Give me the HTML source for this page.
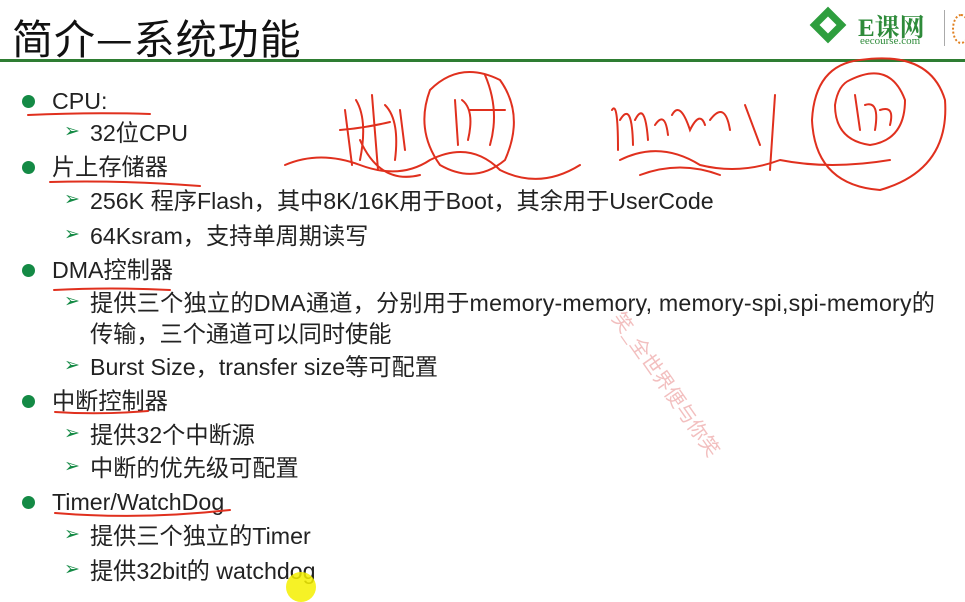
<!DOCTYPE html>
<html><head><meta charset="utf-8"><style>
body{margin:0;width:965px;height:597px;background:#fff;overflow:hidden;position:relative;font-family:"Liberation Sans","Noto Sans CJK SC",sans-serif;color:#222}
.t{position:absolute;left:12px;top:6px;font-size:41px;font-family:"Noto Sans CJK SC",sans-serif;color:#111;letter-spacing:1px}
.line{position:absolute;left:0;top:59px;width:965px;height:3px;background:#2e7d32}
.r{position:absolute;font-size:23.2px;white-space:nowrap;line-height:26px}
.d{position:absolute;width:13px;height:13px;border-radius:50%;background:#148a45}
.a{position:absolute;color:#148a45;font-size:19px}
</style></head><body>
<div class="t">简介—系统功能</div>
<div class="line"></div>
<div style="position:absolute;left:815px;top:12px;width:26px;height:26px;background:#2e9e3e;transform:rotate(45deg)"></div>
<div style="position:absolute;left:822px;top:19px;width:12px;height:12px;background:#fff;transform:rotate(45deg)"></div>
<div style="position:absolute;left:858px;top:8px;font-size:25px;color:#2e8b3a;font-family:'Liberation Serif','Noto Serif CJK SC',serif;font-weight:bold">E课网</div>
<div style="position:absolute;left:860px;top:35px;font-size:11px;color:#2e8b3a;font-family:'Liberation Serif',serif">eecourse.com</div>
<div style="position:absolute;left:944px;top:10px;width:1px;height:36px;background:#aaa"></div>
<div style="position:absolute;left:952px;top:14px;width:14px;height:26px;border:2px dotted #e08020;border-radius:50%"></div>

<div class="d" style="left:22px;top:95px"></div><div class="r" style="left:52px;top:88px">CPU:</div>
<div class="a" style="left:64px;top:120px">➢</div><div class="r" style="left:90px;top:120px">32位CPU</div>
<div class="d" style="left:22px;top:161px"></div><div class="r" style="left:52px;top:154px">片上存储器</div>
<div class="a" style="left:64px;top:188px">➢</div><div class="r" style="left:90px;top:188px">256K 程序Flash，其中8K/16K用于Boot，其余用于UserCode</div>
<div class="a" style="left:64px;top:223px">➢</div><div class="r" style="left:90px;top:223px">64Ksram，支持单周期读写</div>
<div class="d" style="left:22px;top:264px"></div><div class="r" style="left:52px;top:257px">DMA控制器</div>
<div class="a" style="left:64px;top:290px">➢</div><div class="r" style="left:90px;top:290px;letter-spacing:0.2px">提供三个独立的DMA通道，分别用于memory-memory, memory-spi,spi-memory的</div>
<div class="r" style="left:90px;top:321px">传输，三个通道可以同时使能</div>
<div class="a" style="left:64px;top:354px">➢</div><div class="r" style="left:90px;top:354px">Burst Size，transfer size等可配置</div>
<div class="d" style="left:22px;top:395px"></div><div class="r" style="left:52px;top:388px">中断控制器</div>
<div class="a" style="left:64px;top:422px">➢</div><div class="r" style="left:90px;top:422px">提供32个中断源</div>
<div class="a" style="left:64px;top:455px">➢</div><div class="r" style="left:90px;top:455px">中断的优先级可配置</div>
<div class="d" style="left:22px;top:496px"></div><div class="r" style="left:52px;top:489px">Timer/WatchDog</div>
<div class="a" style="left:64px;top:523px">➢</div><div class="r" style="left:90px;top:523px">提供三个独立的Timer</div>
<div class="a" style="left:64px;top:558px">➢</div><div class="r" style="left:90px;top:558px">提供32bit的 watchdog</div>
<div style="position:absolute;left:286px;top:572px;width:30px;height:30px;border-radius:50%;background:#f5f000;opacity:.85"></div>
<div style="position:absolute;left:630px;top:305px;transform:rotate(55deg);transform-origin:left top;color:#f0b0b0;font-size:20px;font-family:'Noto Sans CJK SC',sans-serif;white-space:nowrap;opacity:.8">笑_全世界便与你笑</div>

<svg style="position:absolute;left:0;top:0" width="965" height="597" fill="none" stroke="#e0301e" stroke-width="2" stroke-linecap="round">
<path d="M28 115 Q90 112 150 114"/>
<path d="M50 182 Q120 180 200 186"/>
<path d="M54 290 Q110 287 170 290"/>
<path d="M55 412 Q100 415 148 411"/>
<path d="M55 513 Q140 520 230 510"/>
<path d="M345 110 L352 165 M356 100 Q368 120 360 160 M372 95 L378 170 M340 130 Q365 128 390 122 M385 105 Q400 120 395 160 M400 110 L405 150"/>
<path d="M430 90 Q460 60 500 80 Q525 115 505 160 Q475 185 440 165 Q415 130 430 90"/>
<path d="M455 100 L458 145 M462 100 Q475 110 468 140 M485 75 Q500 110 490 145 M470 110 L505 110"/>
<path d="M612 110 Q618 100 618 150 M620 120 Q632 100 633 145 M635 120 Q645 100 648 140 M655 125 Q665 110 668 135 M672 115 Q680 100 690 130 Q700 110 705 125 M710 120 Q725 100 730 130 M745 105 L760 145 M775 95 L770 170"/>
<path d="M860 60 Q930 50 945 100 Q950 170 880 190 Q815 185 812 120 Q815 65 860 60"/>
<path d="M850 80 Q890 60 905 100 Q905 140 870 145 Q835 140 835 105 Q838 85 850 80"/>
<path d="M855 95 L860 130 M865 105 Q880 100 875 130 M880 110 Q895 105 890 125"/>
<path d="M285 165 Q320 150 360 165 Q400 180 430 160 Q470 140 500 170 Q540 190 580 165"/>
<path d="M360 140 Q380 185 420 175"/>
<path d="M620 160 Q660 140 700 165 Q740 175 780 160 Q830 170 890 160"/>
<path d="M640 175 Q680 160 720 175"/>
</svg>
</body></html>
